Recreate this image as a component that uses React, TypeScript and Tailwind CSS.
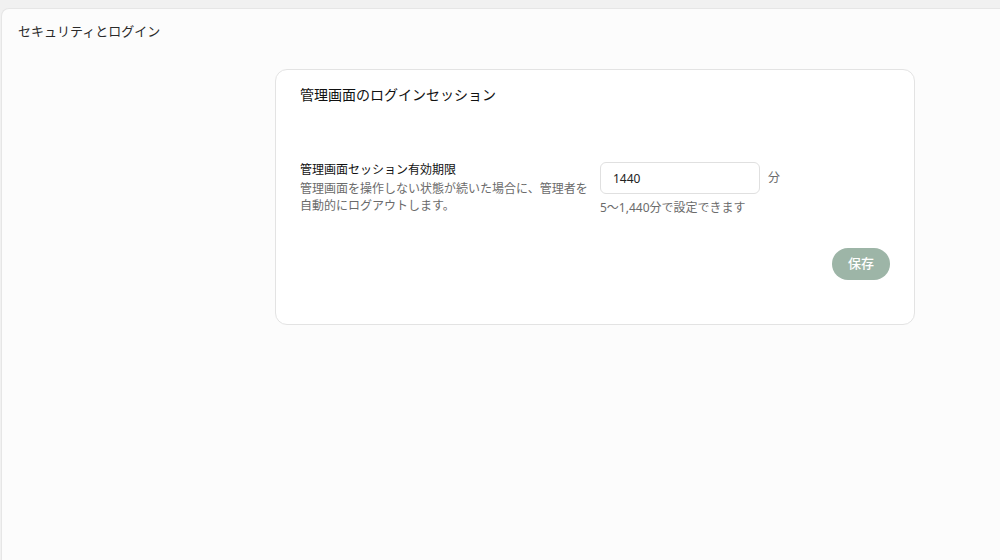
import React, { JSX, useState } from 'react';

const font = { fontFamily: '"Noto Sans", "Noto Sans CJK JP", sans-serif' };

export default function App(): JSX.Element {
  const [minutes, setMinutes] = useState<string>('1440');

  return (
    <div className="h-[560px] w-[1000px] bg-[#f1f1f1] pt-2 pl-px" style={font}>
      <div className="h-full rounded-tl-lg border-l border-t border-[#e6e6e6] bg-[#fcfcfc]">
        <h1 className="px-[16px] pt-[12px] text-[13px] leading-5 text-[#2a2a2a]">セキュリティとログイン</h1>

        {/* Session settings card */}
        <section className="ml-[273px] mt-[28px] h-[256px] w-[640px] rounded-xl border border-[#e3e3e3] bg-white pl-6 pr-6 pt-[15px]">
          <h2 className="text-[14px] font-normal leading-5 text-[#111]">管理画面のログインセッション</h2>

          <div className="mt-[56px] flex items-start gap-[10px]">
            <div className="w-[290px]">
              <div className="text-[12px] font-normal leading-[18px] text-[#111]">管理画面セッション有効期限</div>
              <p className="mt-[1px] text-[12px] leading-[17px] text-[#6b6b6b]">
                管理画面を操作しない状態が続いた場合に、管理者を自動的にログアウトします。
              </p>
            </div>

            <div className="pt-px">
              <div className="flex items-center gap-2">
                <input
                  value={minutes}
                  onChange={(e) => setMinutes(e.target.value)}
                  className="h-[32px] w-[160px] rounded-md border border-[#e0e0e0] bg-white px-3 text-[12px] text-[#222] outline-none"
                />
                <span className="text-[12px] text-[#6b6b6b]">分</span>
              </div>
              <p className="mt-[5px] text-[12px] leading-[17px] text-[#6b6b6b]">5〜1,440分で設定できます</p>
            </div>
          </div>

          <div className="mt-[32px] flex justify-end">
            <button className="h-[32px] w-[58px] rounded-full bg-[#9db5a7] text-[13px] font-medium text-white">保存</button>
          </div>
        </section>
      </div>
    </div>
  );
}
